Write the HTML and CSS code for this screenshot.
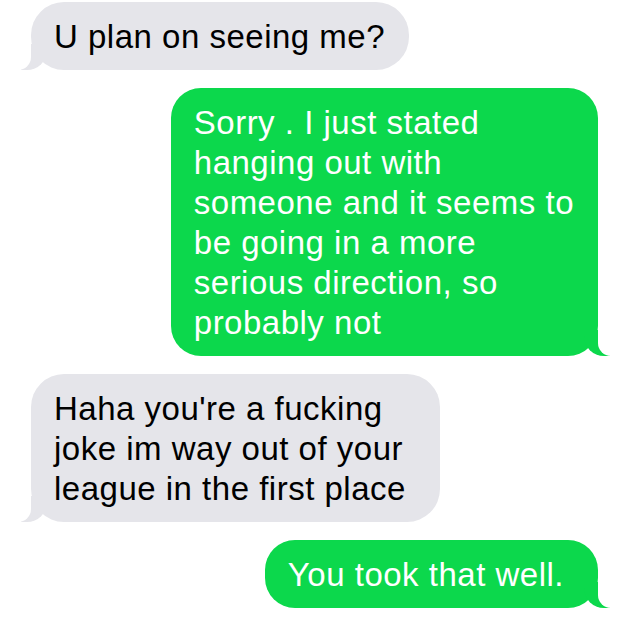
FILE: index.html
```html
<!DOCTYPE html>
<html lang="en">
<head>
  <meta charset="UTF-8">
  <meta name="viewport" content="width=device-width, initial-scale=1.0">
  <title>Messages</title>
  <link rel="stylesheet" href="styles.css">
</head>
<body>

<div class="thread">
  <div class="bubble received">U plan on seeing me?</div>

  <div class="bubble sent">
    Sorry . I just stated<br>
    hanging out with<br>
    someone and it seems to<br>
    be going in a more<br>
    serious direction, so<br>
    probably not
  </div>

  <div class="bubble received roomy">
    Haha you're a fucking<br>
    joke im way out of your<br>
    league in the first place
  </div>

  <div class="bubble sent roomy">You took that well.</div>
</div>

</body>
</html>
```

FILE: styles.css
```css
body {
  margin: 0;
  background: #ffffff;
  font-family: 'Liberation Sans', Arial, sans-serif;
}

.thread {
  display: flex;
  flex-direction: column;
  gap: 18px;
  padding: 2px 32px 0 31px;
}

.bubble {
  position: relative;
  padding: 15px 24px 13px 23px;
  border-radius: 33px;
  font-size: 33px;
  line-height: 40px;
  letter-spacing: 0.5px;
}

/* tail is two pseudo elements: a coloured blob and a white cut-out */
.bubble::before,
.bubble::after {
  content: "";
  position: absolute;
  bottom: 0;
  height: 26px;
}

.received {
  align-self: flex-start;
  background: #e5e5ea;
  color: #000000;
}

.received::before {
  left: -10px;
  width: 26px;
  background: #e5e5ea;
  border-bottom-right-radius: 20px;
  z-index: 0;
}

.received::after {
  left: -15px;
  width: 15px;
  background: #ffffff;
  border-bottom-right-radius: 13px;
  z-index: 1;
}

.sent {
  align-self: flex-end;
  background: #0cd84c;
  color: #ffffff;
  border-radius: 30px;
}

.sent::before {
  right: -12px;
  width: 26px;
  background: #0cd84c;
  border-bottom-left-radius: 20px;
  z-index: 0;
}

.sent::after {
  right: -17px;
  width: 17px;
  background: #ffffff;
  border-bottom-left-radius: 13px;
  z-index: 1;
}

.roomy {
  padding-right: 34px;
}
```
